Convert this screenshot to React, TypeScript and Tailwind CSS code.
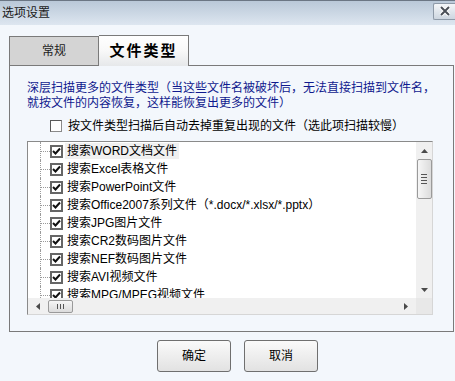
const font = { fontFamily: '"Liberation Sans", "Noto Sans CJK SC", sans-serif' }

const items = [
    '搜索WORD文档文件',
    '搜索Excel表格文件',
    '搜索PowerPoint文件',
    '搜索Office2007系列文件（*.docx/*.xlsx/*.pptx）',
    '搜索JPG图片文件',
    '搜索CR2数码图片文件',
    '搜索NEF数码图片文件',
    '搜索AVI视频文件',
    '搜索MPG/MPEG视频文件',
]

const CheckMark = () => (
    <svg width="9" height="8" viewBox="0 0 9 8">
        <path d="M1 4 L3.5 6.5 L8 1.5" stroke="#111" strokeWidth="2" fill="none" />
    </svg>
)

const TreeRow = ({ label, first }: { label: string; first: boolean }) => (
    <div className="relative flex h-[18px] items-center">
        <div className="absolute left-[12px] top-0 h-full border-l border-dotted border-[#9a9a9a]" />
        <div className="ml-[13px] w-[9px] border-t border-dotted border-[#9a9a9a]" />
        <div className="flex size-[13px] items-center justify-center border-2 border-[#666] bg-white">
            <CheckMark />
        </div>
        <span
            className={`ml-[2px] whitespace-nowrap px-[2px] text-[12px] leading-[16px] text-black ${first ? 'bg-[#f0f0f0]' : ''}`}
        >
            {label}
        </span>
    </div>
)

const ScrollArrow = ({ dir }: { dir: 'up' | 'down' | 'left' | 'right' }) => {
    const d = {
        up: 'M0 4 L3.5 0 L7 4 Z',
        down: 'M0 0 L7 0 L3.5 4 Z',
        left: 'M4 0 L4 7 L0 3.5 Z',
        right: 'M0 0 L4 3.5 L0 7 Z',
    }[dir]
    const vertical = dir === 'up' || dir === 'down'
    return (
        <svg width={vertical ? 7 : 4} height={vertical ? 4 : 7} viewBox={vertical ? '0 0 7 4' : '0 0 4 7'}>
            <path d={d} fill="#4a4a4a" />
        </svg>
    )
}

export default function App() {
    return (
        <div className="flex h-[381px] w-[455px] flex-col overflow-hidden bg-[#f3f7fc]" style={font}>
            {/* title bar */}
            <div className="flex h-[25px] items-center justify-between border-t border-[#6b7684] bg-gradient-to-b from-[#b9c8d8] to-[#dde6f0] pl-[2px]">
                <span className="text-[12px] leading-none text-[#1a1a1a]">选项设置</span>
                <div className="mb-[4px] flex h-[17px] w-[22px] items-center justify-center rounded-l-[2px] border border-r-0 border-[#8e9aa8] bg-gradient-to-b from-[#f4f6f9] to-[#cdd6e0]">
                    <svg width="12" height="10" viewBox="0 0 12 10">
                        <path d="M2 1 L10 9 M10 1 L2 9" stroke="#fff" strokeWidth="4" />
                        <path d="M2 1 L10 9 M10 1 L2 9" stroke="#4a4f57" strokeWidth="2" />
                    </svg>
                </div>
            </div>

            <div className="flex flex-col px-[9px] pt-[10px]">
                {/* tabs */}
                <div className="flex h-[30px] items-end">
                    <div className="flex h-[29px] w-[90px] items-center justify-center border border-b-0 border-[#7a7a7a] bg-[#d4d4d4] text-[12px] text-[#222]">
                        常规
                    </div>
                    <div className="relative -mb-px flex h-[31px] w-[90px] items-center justify-center border border-b-0 border-l-0 border-[#7a7a7a] bg-gradient-to-b from-white via-[#f8f8f8] to-[#e6e8ea] text-[15px] font-bold tracking-[2px] text-black">
                        文件类型
                    </div>
                </div>

                {/* panel */}
                <div className="flex h-[267px] w-[445px] flex-col border border-[#7a7a7a] pl-[17px] pr-[18px] pt-[15px]">
                    <p className="text-[12px] leading-[15px] text-[#101a8e]">
                        深层扫描更多的文件类型（当这些文件名被破坏后，无法直接扫描到文件名，
                        <br />
                        就按文件的内容恢复，这样能恢复出更多的文件）
                    </p>
                    <label className="ml-[23px] mt-[7px] flex items-center gap-[6px] text-[12px] leading-[16px] text-black">
                        <span className="size-[12px] border border-[#8a8a8a] border-l-[#5a5a5a] border-t-[#5a5a5a] bg-white" />
                        按文件类型扫描后自动去掉重复出现的文件（选此项扫描较慢）
                    </label>

                    {/* tree list */}
                    <div className="mt-[7px] flex h-[174px] w-[406px] flex-col border border-[#8a8a8a] border-b-[#d6d6d6] border-r-[#d6d6d6] bg-white">
                        <div className="flex min-h-0 flex-1">
                            <div className="flex-1 overflow-hidden">
                                {items.map((t, i) => (
                                    <TreeRow key={t} label={t} first={i === 0} />
                                ))}
                            </div>
                            {/* vertical scrollbar */}
                            <div className="flex w-[16px] flex-col items-center bg-[#f0f0f0]">
                                <div className="flex h-[17px] items-center justify-center">
                                    <ScrollArrow dir="up" />
                                </div>
                                <div className="flex h-[40px] w-[15px] items-center justify-center rounded-[2px] border border-[#9a9a9a] bg-gradient-to-r from-[#f6f6f6] to-[#dcdcdc]">
                                    <div className="flex flex-col gap-[2px]">
                                        <div className="h-px w-[6px] bg-[#555]" />
                                        <div className="h-px w-[6px] bg-[#555]" />
                                        <div className="h-px w-[6px] bg-[#555]" />
                                        <div className="h-px w-[6px] bg-[#555]" />
                                    </div>
                                </div>
                                <div className="flex-1" />
                                <div className="flex h-[17px] items-center justify-center">
                                    <ScrollArrow dir="down" />
                                </div>
                            </div>
                        </div>
                        {/* horizontal scrollbar */}
                        <div className="flex h-[16px] items-center bg-[#f0f0f0]">
                            <div className="flex w-[20px] items-center justify-center">
                                <ScrollArrow dir="left" />
                            </div>
                            <div className="flex h-[13px] w-[25px] items-center justify-center gap-[2px] rounded-[2px] border border-[#9a9a9a] bg-gradient-to-b from-[#f6f6f6] to-[#dcdcdc]">
                                <div className="h-[5px] w-px bg-[#555]" />
                                <div className="h-[5px] w-px bg-[#555]" />
                                <div className="h-[5px] w-px bg-[#555]" />
                            </div>
                            <div className="flex-1" />
                            <div className="flex w-[20px] items-center justify-center">
                                <ScrollArrow dir="right" />
                            </div>
                            <div className="h-full w-[16px] bg-[#e8e8e8]" />
                        </div>
                    </div>
                </div>

                {/* buttons */}
                <div className="ml-[148px] mt-[8px] flex gap-[13px]">
                    <button className="h-[32px] w-[74px] rounded-[3px] border border-[#6f6f6f] bg-gradient-to-b from-[#fafafa] to-[#e2e2e2] text-[12px] text-black">
                        确定
                    </button>
                    <button className="h-[32px] w-[74px] rounded-[3px] border border-[#6f6f6f] bg-gradient-to-b from-[#fafafa] to-[#e2e2e2] text-[12px] text-black">
                        取消
                    </button>
                </div>
            </div>
        </div>
    )
}
